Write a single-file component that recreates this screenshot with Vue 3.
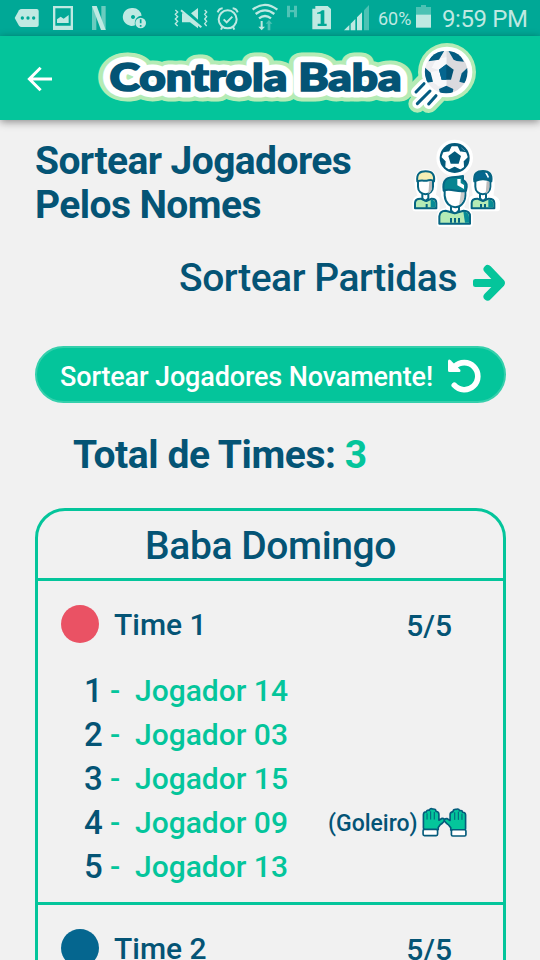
<script setup>
const players = [
  { n: 1, name: 'Jogador 14' },
  { n: 2, name: 'Jogador 03' },
  { n: 3, name: 'Jogador 15' },
  { n: 4, name: 'Jogador 09', keeper: true },
  { n: 5, name: 'Jogador 13' },
]
const teams = [
  { name: 'Time 1', color: '#ea5264', count: '5/5', players },
  { name: 'Time 2', color: '#05668f', count: '5/5', players: [] },
]
</script>

<template>
  <div class="screen">
    <div class="status">
      <svg class="status-icons" viewBox="0 0 1122 108" fill="#bfe9e2">
        <path d="M44 54 57 31q3-4 8-4h45q6 0 6 6v42q0 6-6 6H65q-5 0-8-4z" />
        <g fill="#00a896"><circle cx="67" cy="54" r="5" /><circle cx="84" cy="54" r="5" /><circle cx="101" cy="54" r="5" /></g>
        <path fill-rule="evenodd" d="M159 18h60v72h-60zM166 25v52h46V25z" />
        <path d="M171 69V58l11-8 9 6 15-11v24z" />
        <path d="M276 18h13v72h-13zM304 18h13v72h-13z" opacity=".55" />
        <path d="M276 18h14l27 72h-14z" />
        <path fill-rule="evenodd" d="M399 24a27 27 0 0 1 26 23c-14 1-23 12-20 29a27 27 0 1 1-6-52zm0 21a6 6 0 1 0 .1 0z" />
        <circle cx="422" cy="69" r="16" />
        <path d="M422 58v12M422 75v5" fill="none" stroke="#00a896" stroke-width="5" />
        <g fill="none" stroke="#bfe9e2" stroke-width="4">
          <path d="m526 30 7 6-7 7 7 7-7 7 7 7-7 7 7 7M614 30l6 6-6 7 6 7-6 7 6 7-6 7 6 7" />
        </g>
        <path d="M546 40h9l39 33v12l-24-18h-24zM573 40l21-16v35z" />
        <path d="m543 31 61 51" stroke="#bfe9e2" stroke-width="6" />
        <g fill="none" stroke="#bfe9e2" stroke-width="6">
          <circle cx="683" cy="58" r="27" /><path d="m671 58 9 9 17-17M653 37q4-11 15-12M713 37q-4-11-15-12M667 81l-4 8M699 81l4 8" />
          <path d="M758 29q37-29 74 0M767 42q28-22 56 0M777 55q18-14 36 0" stroke-width="7" />
        </g>
        <path d="M782 63h6v17h7l-10 11-10-11h7z" /><path d="M803 91V71h-6l10-11 10 11h-6v20z" opacity=".4" />
        <path d="M861 17h9v13h12V17h9v35h-9V37h-12v15h-9z" opacity=".42" />
        <path d="M937 26h9V18h37l10 9v61h-56z" />
        <path d="M951 38q11-1 15-7h7v40h7v7h-27v-7h9V41h-11z" fill="#00a896" />
        <path d="m1032 91 16-16v16zM1052 71l14-14v34h-14zM1071 52l15-15v54h-15z" />
        <path d="M1092 31l15-16v76h-15z" opacity=".4" />
      </svg>
      <span class="percent">60%</span>
      <svg class="battery" viewBox="0 0 45 69" fill="#bfe9e2"><path d="M0 6h15V0h15v6h15v24H0z" opacity=".4" /><path d="M0 29h45v39H0z" /></svg>
      <span class="clock">9:59 PM</span>
    </div>

    <header class="appbar">
      <svg class="back" viewBox="0 0 24 24"><path d="M24 12H2M12.6.8 1.4 12l11.2 11.2" fill="none" stroke="#fff" stroke-width="3" /></svg>
      <svg class="logo" viewBox="90 36 400 84">
        <g stroke-linejoin="round" stroke-linecap="round">
          <use href="#wordmark" fill="#b5ebb5" stroke="#b5ebb5" stroke-width="21" />
          <g transform="translate(280 36) scale(.33333)">
            <g fill="#b5ebb5" stroke="#b5ebb5"><circle cx="501" cy="108" r="87" stroke="none" /><path d="m410 163 24-25M412 203l38-38M446 204l26-27" stroke-width="54" /></g>
            <g fill="#fff" stroke="#fff"><circle cx="501" cy="108" r="76" stroke="none" /><path d="m408 168 24-25M412 203l38-38M446 204l26-27" stroke-width="30" /></g>
          </g>
          <use href="#wordmark" fill="#fff" stroke="#fff" stroke-width="13" />
        </g>
        <g fill="#045475" stroke="#045475" stroke-width="1.7">
          <text id="wordmark" x="109.500" y="91" font-family="Lato, sans-serif" font-weight="900" font-size="37" textLength="292" lengthAdjust="spacingAndGlyphs">Controla Baba</text>
        </g>
        <g transform="translate(384 8) scale(.33333)">
          <clipPath id="ball"><circle cx="186.500" cy="192" r="64" /></clipPath>
          <g clip-path="url(#ball)">
            <path d="M122 128h65v128h-65z" fill="#ededf0" /><path d="M187 128h65v128h-65z" fill="#dadade" />
            <path d="M187 148v26l-20 13-24-8 14-26zM167 187l8 26-17 17-20-12-6-24zM175 213h12v25l-25-3-4-5z" fill="#f8f8fa" />
            <path d="m187 169 22 16-8 30h-28l-8-30z" fill="#045475" /><path d="M187 169v46h-14l-8-30z" fill="#05668f" />
            <path d="M133 160l20-32h28l-16 27zM209 155l-16-27h28l19 33-22-2zM120 176l20 18 7 27-24 4zM254 176l-21 20-7 25 22 6zM165 243l22-10 21 10-3 18h-36z" fill="#045c82" />
          </g>
          <path d="m96 252 24-25M100 287l38-38M134 288l22-25" fill="none" stroke="#045c82" stroke-width="9" stroke-linecap="round" />
        </g>
      </svg>
    </header>

    <main>
      <section class="heading">
        <h1>Sortear Jogadores<br />Pelos Nomes</h1>
        <svg class="people" viewBox="30 27 270 273">
          <g fill="#fff" stroke="#fff" stroke-width="18" stroke-linejoin="round">
            <circle cx="164" cy="84" r="46" />
            <path d="M46 235v-18q1-12 18-14l-10-30q-8-46 23-46 30 0 26 42l-5 30 12 8v28zM216 235v-28l12-5-5-35q0-38 26-38 28 0 26 42l-5 32q18 2 21 14v18zM120 282v-23q0-14 20-16l10-10-18-38q-5-50 34-50 34 0 32 50l-16 38 10 10q16 2 17 16v23z" />
          </g>
          <circle cx="164" cy="84" r="45" fill="#045b7b" />
          <path d="m156 51h16l7 15 18 3 4 12-12 12 1 17-9 6-17-8-17 8-9-6 1-17-12-12 4-12 18-3z" fill="#fff" stroke="#fff" stroke-width="4" stroke-linejoin="round" />
          <path d="m164 64 19 14-7 23h-24l-7-23z" fill="#045b7b" />
          <path d="m184 53 11 10" fill="none" stroke="#4f91a8" stroke-width="3" />
          <g stroke="#066582" stroke-width="6" stroke-linejoin="round">
            <path d="M45 235v-16q0-13 17-13l17 7 16-7q14 0 14 13v16zM215 235v-16q0-13 17-13l17 7 17-7q17 0 17 13v16z" fill="#b5ebb5" />
            <path d="M92 209q14 0 14 12v11H92zM265 209q15 0 15 12v11h-15z" fill="#078c96" stroke="none" />
            <path d="M67 181h18v24q-9 13-18 0zM240 181h18v24q-9 13-18 0z" fill="#fff" />
            <path d="M54 146h45v24c0 30-45 30-45 0zM226 146h45v24c0 30-45 30-45 0z" fill="#fff" />
            <path d="M88 154h8v20q-1 12-11 17zM260 154h8v20q-1 12-11 17z" fill="#bbb" stroke="none" />
            <path d="M52 154c-3-24 8-30 25-30 20 0 28 10 25 30-11-11-16 1-31-2q-10-1-19 2z" fill="#f4efb4" />
            <path d="M223 154c-3-24 8-31 26-31 20 0 28 11 25 31-20-10-34-6-51 0z" fill="#04678f" />
            <path d="M80 222v11M243 222v11M255 222v11" />
            <path d="M118 281v-22q1-17 19-17l27 8 27-8q19 0 19 17v22z" fill="#b5ebb5" />
            <path d="M190 245q17 0 17 16v17h-12z" fill="#078c96" stroke="none" />
            <path d="M153 224h24v17q-12 17-24 0z" fill="#fff" />
            <path d="M134 175h62v22c-3 46-58 46-62 0z" fill="#fff" />
            <path d="M184 182h9v20q-4 18-16 24z" fill="#ccc" stroke="none" />
            <path d="M131 182c-5-34 11-41 35-41 10 0 17-2 23-3v12c11 6 13 19 9 32-25 7-46-9-67 0z" fill="#078490" />
            <path d="M153 264v14M165 264v14M177 264v14" />
          </g>
          <path d="M172 147h10v12l10 6v12l-20-11zM255 128l9 17 3-5-6-11z" fill="#fff" />
        </svg>
      </section>

      <div class="matches">
        <span>Sortear Partidas</span>
        <svg viewBox="0 0 96 102"><path d="M35 18a12 12 0 0 1 18-17l40 42q6 8 0 16l-40 41a12 12 0 0 1-18-17l20-20H7q-7 0-7-6V45q0-6 7-6h48z" fill="#04c59b" /></svg>
      </div>

      <button class="again">
        <span>Sortear Jogadores Novamente!</span>
        <svg viewBox="0 0 100 102"><path d="M20 26A41 41 0 1 1 19 82" fill="none" stroke="#fff" stroke-width="17" stroke-linecap="round" /><path d="M0 7q3-5 8-1l29 29q3 7-5 7H5q-5 0-5-5z" fill="#fff" /></svg>
      </button>

      <h2>Total de Times: <b>3</b></h2>

      <section class="card">
        <h3>Baba Domingo</h3>
        <article v-for="team in teams" :key="team.name" class="team">
          <div class="team-head">
            <i class="dot" :style="{ background: team.color }"></i>
            <span class="team-name">{{ team.name }}</span>
            <span class="count">{{ team.count }}</span>
          </div>
          <div v-for="p in team.players" :key="p.n" class="player">
            <span class="num">{{ p.n }}</span><span class="dash">-</span><span class="name">{{ p.name }}</span>
            <template v-if="p.keeper">
              <span class="keeper">(Goleiro)</span>
              <svg class="gloves" viewBox="304 52 136 88">
                <g id="glove" stroke="#045b7b" stroke-width="5" stroke-linejoin="round">
                  <path d="M308 113V72q1-9 9-8 1-7 9-5 3-7 10-4 10-1 10 7 9 1 9 9v18l10-6q8 1 8 7-7 9-14 13l-6 8v7h-42q-3-3-3-5z" fill="#04c59b" />
                  <path d="M319 68v19M330 62v25M341 64v23" fill="none" stroke-width="3" />
                  <rect x="307" y="117" width="44" height="19" rx="4" fill="#fff" />
                </g>
                <use href="#glove" transform="matrix(-1 0 0 1 744 1)" />
              </svg>
            </template>
          </div>
        </article>
      </section>
    </main>
  </div>
</template>

<style>
body { margin: 0; background: #f1f1f1; overflow: hidden; }
</style>

<style scoped>
.screen { width: 540px; height: 960px; overflow: hidden; background: #f1f1f1; color: #045475; font-family: Roboto, sans-serif; white-space: nowrap; }
svg { overflow: visible; }
.status { display: flex; height: 36px; background: #00a896; color: #bfe9e2; }
.status-icons { width: 374px; height: 36px; }
.percent { width: 42px; padding-left: 4px; box-sizing: border-box; font-size: 18px; line-height: 38px; }
.battery { width: 15px; height: 23px; margin-top: 5px; }
.clock { margin-left: 11px; font-size: 24px; line-height: 38px; letter-spacing: -.4px; }
.appbar { position: relative; display: flex; align-items: center; height: 84px; background: #04c59b; box-shadow: 0 2px 8px rgba(0, 0, 0, .42); }
.back { width: 24px; height: 24px; margin: 2px 38px 0 28px; }
.logo { width: 400px; height: 84px; }
main { padding: 19px 34px 0 35px; }
h1, h2, h3 { margin: 0; }
.heading { display: flex; justify-content: space-between; height: 117px; }
h1 { font-size: 39px; line-height: 44px; font-weight: 700; letter-spacing: -.6px; }
.people { width: 90px; height: 91px; margin-right: 6px; }
.matches { display: flex; align-items: center; justify-content: flex-end; height: 44px; font-size: 39px; line-height: 44px; font-weight: 500; letter-spacing: -.46px; }
.matches svg { width: 32px; height: 34px; margin: 9px 1px 0 16px; }
.again { display: flex; align-items: center; justify-content: space-between; width: 471px; height: 57px; margin: 46px 0 0; padding: 0 23px; border: 2px solid #35cfac; border-radius: 29px; background: #04c59b; color: #fff; font: 500 27px/57px Roboto, sans-serif; letter-spacing: -.14px; }
.again span { padding-top: 5px; }
.again svg { width: 33px; height: 34px; }
h2 { padding: 29px 0 0 38px; font-size: 39px; line-height: 46px; font-weight: 700; letter-spacing: -.43px; }
h2 b { color: #04c59b; font-weight: 700; }
.card { box-sizing: border-box; width: 471px; height: 700px; margin-top: 30px; border: 3px solid #04c59b; border-radius: 30px; }
h3 { height: 64px; padding-top: 3px; text-align: center; font-size: 39px; line-height: 65px; font-weight: 500; letter-spacing: -.4px; }
.team { box-sizing: border-box; height: 324px; padding: 24px 51px 0 23px; border-top: 3px solid #04c59b; }
.team-head { display: flex; align-items: center; height: 38px; margin-bottom: 26px; font-size: 30px; line-height: 38px; font-weight: 500; }
.dot { width: 38px; height: 38px; margin-right: 15px; border-radius: 50%; }
.team-name { padding-top: 2px; }
.count { margin-left: auto; padding-top: 4px; }
.player { display: flex; align-items: center; height: 44px; padding-left: 23px; font-size: 30px; line-height: 44px; font-weight: 500; color: #04c59b; }
.player > * { flex: none; }
.num { width: 26px; font-size: 33px; color: #045475; }
.dash { width: 25px; }
.name { width: 193px; }
.keeper { width: 94px; padding-top: 1px; font-size: 23px; color: #045475; }
.gloves { width: 45px; height: 29px; margin-top: -2px; }
</style>
